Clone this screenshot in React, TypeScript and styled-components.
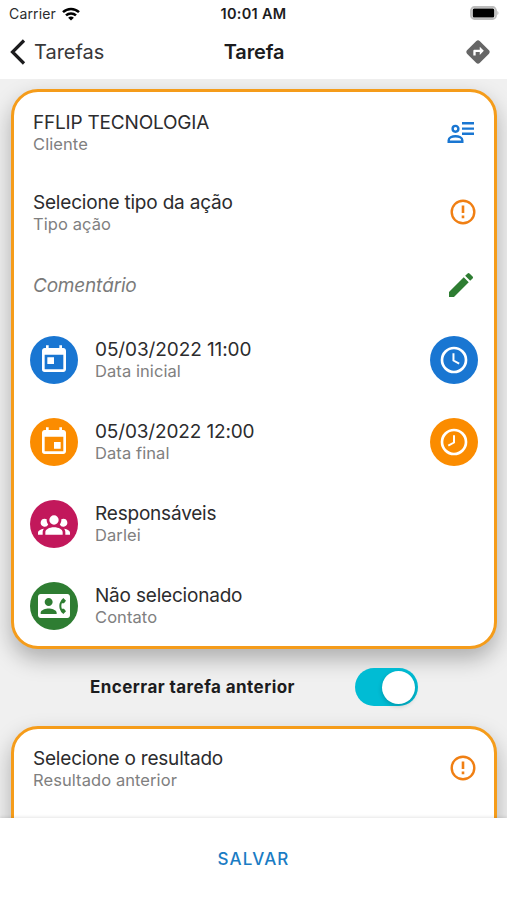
import React from "react";
import styled, { createGlobalStyle } from "styled-components";
import {
  MdDirections,
  MdToday,
  MdEvent,
  MdContactPhone,
  MdEdit,
} from "react-icons/md";

const GlobalStyle = createGlobalStyle`
  * { box-sizing: border-box; }
  body { margin: 0; font-family: Inter, "Liberation Sans", sans-serif; color: #2c2c2e; }
  svg { display: block; flex: none; }
`;

const Screen = styled.div`
  width: 507px;
  height: 900px;
  display: flex;
  flex-direction: column;
  overflow: hidden;
  background: #f0f0f0;
`;

const StatusBar = styled.div`
  height: 27px;
  flex: none;
  display: grid;
  grid-template-columns: 1fr auto 1fr;
  align-items: center;
  padding: 0 8px;
  background: #fff;
`;

const Carrier = styled.div`
  display: flex;
  align-items: center;
  gap: 6px;
  padding-left: 1px;
  font-size: 14px;
  line-height: 18px;
  letter-spacing: 0.15px;
`;

const Clock = styled.div`
  font-size: 14.5px;
  line-height: 18px;
  font-weight: 600;
  letter-spacing: 0.3px;
  color: #1c1c1e;
`;

const BatterySlot = styled.div`
  display: flex;
  justify-content: flex-end;
  padding-bottom: 1px;
`;

const NavBar = styled.header`
  height: 52px;
  flex: none;
  display: grid;
  grid-template-columns: 1fr auto 1fr;
  align-items: center;
  padding: 0 14px 2px 15px;
  background: #fff;
`;

const BackButton = styled.button`
  display: flex;
  align-items: center;
  gap: 8px;
  margin-left: -5px;
  padding: 0;
  border: 0;
  background: none;
  font: inherit;
  font-size: 20px;
  line-height: 26px;
  color: #38383a;
`;

const Title = styled.h1`
  margin: 0;
  font-size: 20px;
  line-height: 26px;
  font-weight: 600;
  letter-spacing: -0.15px;
  color: #1c1c1e;
`;

const NavAction = styled.div`
  display: flex;
  justify-content: flex-end;
  padding-right: 1px;
  color: #666;
`;

const Content = styled.main`
  flex: 1;
  min-height: 0;
  overflow: hidden;
  padding: 10px 10px 0 11px;
`;

const Card = styled.section<{ $height: number }>`
  height: ${(p) => p.$height}px;
  border: 3px solid #f59c1a;
  border-radius: 27px;
  background: #fff;
  box-shadow: 0 10px 22px rgba(0, 0, 0, 0.28);
`;

const Row = styled.div<{ $height: number; $badge?: boolean }>`
  height: ${(p) => p.$height}px;
  display: flex;
  align-items: center;
  gap: 17px;
  padding: 0 ${(p) => (p.$badge ? "16.5px 0 16px" : "17px 0 19px")};
`;

const Labels = styled.div`
  flex: 1;
`;

const Primary = styled.div<{ $spacing?: number }>`
  font-size: 19px;
  line-height: 24px;
  letter-spacing: ${(p) => p.$spacing ?? -0.2}px;
`;

const Secondary = styled.div`
  margin-top: -1px;
  padding-bottom: 1px;
  font-size: 16.5px;
  line-height: 20px;
  letter-spacing: 0.08px;
  color: #808080;
`;

const Placeholder = styled.div`
  flex: 1;
  font-size: 19px;
  line-height: 24px;
  font-style: italic;
  letter-spacing: -0.2px;
  color: #7a7a7a;
`;

const Trailing = styled.div<{ $inset: number }>`
  padding: 0 ${(p) => p.$inset}px 2px 0;
`;

const Badge = styled.div<{ $color: string }>`
  width: 48px;
  height: 48px;
  flex: none;
  display: flex;
  align-items: center;
  justify-content: center;
  border-radius: 50%;
  background: ${(p) => p.$color};
  color: #fff;
`;

const ToggleRow = styled.div`
  height: 77px;
  display: flex;
  align-items: center;
  justify-content: space-between;
  padding: 0 79px 1px;
`;

const ToggleLabel = styled.div`
  font-size: 17px;
  line-height: 22px;
  font-weight: 700;
  letter-spacing: 0.44px;
  color: #1c1c1e;
`;

const Switch = styled.button`
  width: 63px;
  height: 38px;
  display: flex;
  justify-content: flex-end;
  align-items: center;
  padding: 0 3px;
  border: 0;
  border-radius: 20px;
  background: #00bcd4;
`;

const Thumb = styled.span`
  width: 33px;
  height: 33px;
  border-radius: 50%;
  background: #fff;
  box-shadow: 0 2px 5px rgba(0, 0, 0, 0.2);
`;

const Footer = styled.footer`
  position: relative;
  height: 82px;
  flex: none;
  display: flex;
  justify-content: center;
  align-items: center;
  background: #fff;
  box-shadow: 0 -1px 3px rgba(0, 0, 0, 0.1);
`;

const SaveButton = styled.button`
  padding: 0;
  border: 0;
  background: none;
  font: inherit;
  font-size: 17px;
  line-height: 22px;
  font-weight: 500;
  letter-spacing: 1.1px;
  color: #1a7cc4;
`;

const WifiIcon = () => (
  <svg width="18" height="14" viewBox="0 0 18 14" fill="none" stroke="#000" strokeWidth="2.5">
    <path d="M1 5.2a11.6 11.6 0 0 1 16 0" />
    <path d="M4 8.4a7.2 7.2 0 0 1 10 0" />
    <path d="M9 13.6 6.1 10.7a4.3 4.3 0 0 1 5.8 0z" fill="#000" stroke="none" />
  </svg>
);

const BatteryIcon = () => (
  <svg width="29" height="14" viewBox="0 0 29 14">
    <rect x="1" y="1" width="25" height="12" rx="3.5" fill="#fff" stroke="#bcbcbc" strokeWidth="1.8" />
    <rect x="2.7" y="2.5" width="21.6" height="9" rx="1.5" fill="#000" />
    <path d="M27.3 5c1.6.5 1.6 3.5 0 4z" fill="#bcbcbc" />
  </svg>
);

const ChevronIcon = () => (
  <svg width="16" height="26" viewBox="0 0 16 26" fill="none" stroke="#1c1c1e" strokeWidth="3.2">
    <path d="M14 1.5 2.5 13 14 24.5" />
  </svg>
);

const PersonDetailsIcon = () => (
  <svg width="27" height="24" viewBox="0 0 27 24" fill="none" stroke="#1976d2" strokeWidth="2.4">
    <circle cx="8.5" cy="8.8" r="2.9" />
    <path d="M1.7 21.7v-1.5c0-2.5 3.3-3.900 6.800-3.900s6.800 1.400 6.800 3.900v1.500z" />
    <path d="M15 3.2h12M15 8.6h12M15 13.8h12" />
  </svg>
);

const AlertIcon = () => (
  <svg width="26" height="26" viewBox="0 0 26 26" fill="none" stroke="#f07f13" strokeWidth="2.4">
    <circle cx="13" cy="13" r="11.3" />
    <path d="M13 6.6v7.4M13 16.6v2.6" strokeWidth="2.6" />
  </svg>
);

const ClockIcon = ({ hand }: { hand: string }) => (
  <svg width="32" height="32" viewBox="0 0 24 24" fill="none" stroke="#fff">
    <circle cx="12" cy="12" r="9" strokeWidth="2" />
    <path d={hand} strokeWidth="1.5" />
  </svg>
);

const GroupIcon = () => (
  <svg width="32" height="32" viewBox="0 0 24 24" fill="#fff">
    <path d="M12 5.5a3.5 3.5 0 1 1 0 7 3.5 3.5 0 0 1 0-7M5 8c.56 0 1.08.15 1.53.42-.15 1.43.27 2.85 1.13 3.96A3 3 0 1 1 5 8m14 0a3 3 0 1 1-2.66 4.38c.86-1.11 1.28-2.53 1.13-3.96C17.92 8.15 18.44 8 19 8M5.5 18.25c0-2.07 2.91-3.75 6.5-3.75s6.5 1.68 6.5 3.75V20h-13zM0 20v-1.5c0-1.39 1.89-2.56 4.45-2.9-.59.68-.95 1.62-.95 2.65V20zm24 0h-3.5v-1.75c0-1.03-.36-1.97-.95-2.65 2.56.34 4.45 1.51 4.45 2.9z" />
  </svg>
);

export default function App() {
  return (
    <>
      <GlobalStyle />
      <Screen>
        <StatusBar>
          <Carrier>
            Carrier
            <WifiIcon />
          </Carrier>
          <Clock>10:01 AM</Clock>
          <BatterySlot>
            <BatteryIcon />
          </BatterySlot>
        </StatusBar>
        <NavBar>
          <BackButton>
            <ChevronIcon />
            Tarefas
          </BackButton>
          <Title>Tarefa</Title>
          <NavAction>
            <MdDirections size={28} />
          </NavAction>
        </NavBar>
        <Content>
          <Card $height={560}>
            <Row $height={81}>
              <Labels>
                <Primary>FFLIP TECNOLOGIA</Primary>
                <Secondary>Cliente</Secondary>
              </Labels>
              <Trailing $inset={3}>
                <PersonDetailsIcon />
              </Trailing>
            </Row>
            <Row $height={80}>
              <Labels>
                <Primary>Selecione tipo da ação</Primary>
                <Secondary>Tipo ação</Secondary>
              </Labels>
              <Trailing $inset={1}>
                <AlertIcon />
              </Trailing>
            </Row>
            <Row $height={66}>
              <Placeholder>Comentário</Placeholder>
              <Trailing $inset={0}>
                <MdEdit size={32} color="#2e7d32" />
              </Trailing>
            </Row>
            <Row $height={82} $badge>
              <Badge $color="#1976d2">
                <MdToday size={32} />
              </Badge>
              <Labels>
                <Primary $spacing={-0.1}>05/03/2022 11:00</Primary>
                <Secondary>Data inicial</Secondary>
              </Labels>
              <Badge $color="#1976d2">
                <ClockIcon hand="M11.6 7v5.4l4.3 2.4" />
              </Badge>
            </Row>
            <Row $height={82} $badge>
              <Badge $color="#fb8c00">
                <MdEvent size={32} />
              </Badge>
              <Labels>
                <Primary $spacing={-0.15}>05/03/2022 12:00</Primary>
                <Secondary>Data final</Secondary>
              </Labels>
              <Badge $color="#fb8c00">
                <ClockIcon hand="M12 7v5.4l-4.3 2.4" />
              </Badge>
            </Row>
            <Row $height={82} $badge>
              <Badge $color="#c2185b">
                <GroupIcon />
              </Badge>
              <Labels>
                <Primary>Responsáveis</Primary>
                <Secondary>Darlei</Secondary>
              </Labels>
            </Row>
            <Row $height={82} $badge>
              <Badge $color="#2e7d32">
                <MdContactPhone size={32} />
              </Badge>
              <Labels>
                <Primary>Não selecionado</Primary>
                <Secondary>Contato</Secondary>
              </Labels>
            </Row>
          </Card>
          <ToggleRow>
            <ToggleLabel>Encerrar tarefa anterior</ToggleLabel>
            <Switch role="switch" aria-checked="true">
              <Thumb />
            </Switch>
          </ToggleRow>
          <Card $height={240}>
            <Row $height={80}>
              <Labels>
                <Primary>Selecione o resultado</Primary>
                <Secondary>Resultado anterior</Secondary>
              </Labels>
              <Trailing $inset={1.5}>
                <AlertIcon />
              </Trailing>
            </Row>
          </Card>
        </Content>
        <Footer>
          <SaveButton>SALVAR</SaveButton>
        </Footer>
      </Screen>
    </>
  );
}
